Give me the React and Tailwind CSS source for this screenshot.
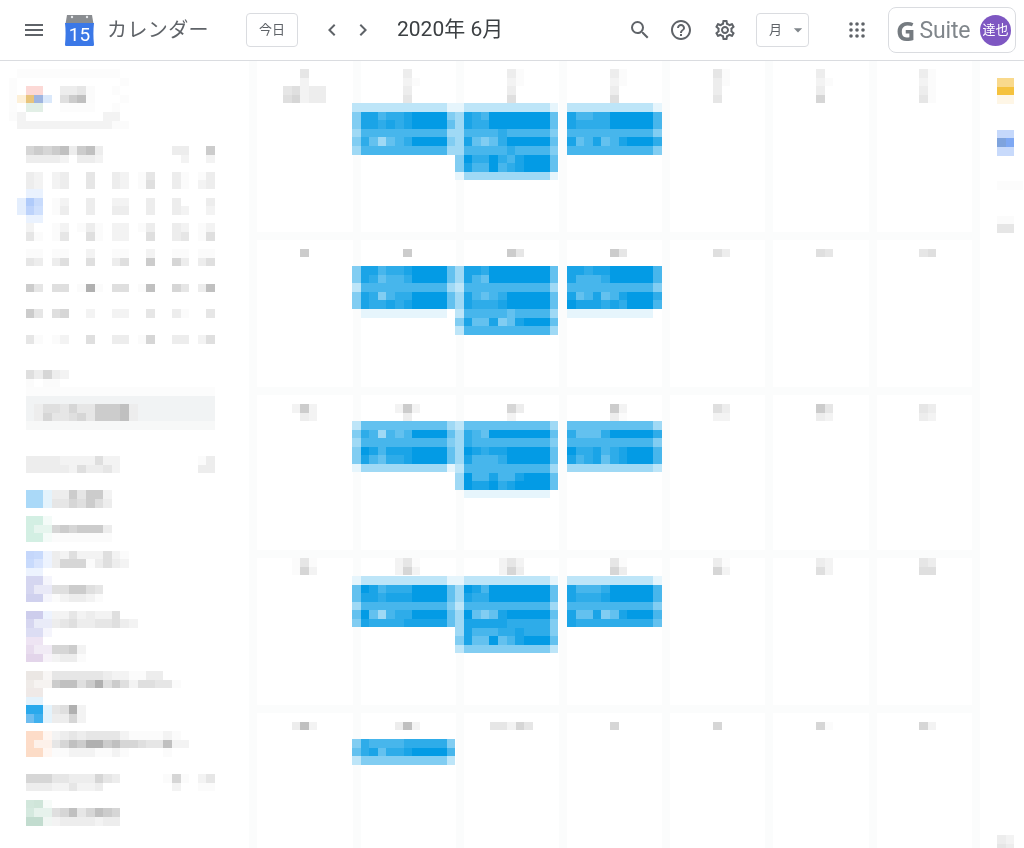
import React from "react";
import { MdMenu, MdChevronLeft, MdChevronRight, MdSearch, MdHelpOutline, MdOutlineSettings, MdArrowDropDown } from "react-icons/md";

const CELL = 8.6;
const GREY = [0, 4, 12, 18, 25, 32, 41, 51, 63, 79];
const BLUE = [0, 0.1, 0.26, 0.38, 0.5, 0.62, 0.73, 0.83, 0.91, 1];
const SWATCH = {
  R: "#fcd9d6", Y: "#fdf0d8", O: "#e8c47c", B: "#9fb5e0", L: "#dbe9fb", G: "#e2efe6",
  a: "#eaf2fe", b: "#b0cbfa", c: "#c8dbfc", d: "#e4eefd", e: "#bdd3fb", f: "#cfe0fd",
  s: "#f1f3f4", t: "#f7f8f8", g: "#aad9f8", h: "#e4f3fc", i: "#d3efe3", j: "#e6f5ee", k: "#f4fbf8",
  l: "#c5d7fb", m: "#c8dafc", n: "#edf3fe", o: "#d8e4fd",
  p: "#d5d6f0", q: "#e9e9f7", r: "#d0d1ee", u: "#f5f5fc", v: "#cdcdec", w: "#d6d6f0", x: "#e9ebf8", y: "#dcddf3",
  z: "#eee4f3", A: "#e8dcee", C: "#f1ebf5", D: "#e3d5ea", E: "#f7f3f9",
  F: "#ebe7e4", H: "#f8f6f5", I: "#efebe8", J: "#f6f3f1", K: "#efe9e7",
  M: "#e3f2fc", N: "#29a9ec", P: "#6dbdf0", Q: "#3fb0ee",
  S: "#fddcc8", T: "#fff6f1", U: "#fdf1ea", V: "#fcdcc7",
  W: "#d2e7dc", X: "#cfe5d9", Z: "#f6fbf8", "!": "#c2dccf", "@": "#e6f2ec", "#": "#d5e9df", $: "#f0f6f3",
  "%": "#f9d98c", "^": "#f5c23e", "&": "#fef6e6", "*": "#c5d8fb", "(": "#7ea3dd", ")": "#7ea8f3", "+": "#c8dafb",
  "~": "#fcfcfc",
};

function cellColor(ch, tone) {
  if (SWATCH[ch]) return SWATCH[ch];
  const n = Number(ch);
  if (tone === "blue") {
    const a = BLUE[n];
    const mix = (c) => Math.round(255 + (c - 255) * a);
    return `rgb(${mix(3)},${mix(155)},${mix(229)})`;
  }
  const v = 255 - GREY[n];
  return `rgb(${v},${v},${v})`;
}

function Mosaic({ rows, tone = "grey", className = "" }) {
  const clean = rows.map((r) => r.replace(/\s/g, ""));
  const cols = Math.max(...clean.map((r) => r.length));
  return (
    <svg
      width={cols * CELL}
      height={clean.length * CELL}
      shapeRendering="crispEdges"
      className={`block shrink-0 blur-[0.5px] ${className}`}
    >
      {clean.map((r, y) =>
        [...r].map((ch, x) =>
          ch === "0" ? null : (
            <rect key={`${x}-${y}`} x={x * CELL} y={y * CELL} width={CELL} height={CELL} fill={cellColor(ch, tone)} />
          )
        )
      )}
    </svg>
  );
}

const createButton = [
  "00 ~~~~~~~~~~~~",
  "0~0 0000000000 0~",
  "0~0 RR 00 334 1 00 ~",
  "0~ YOBL 0 5781 00 0~",
  "0~0 GG 00 ~~~~ 00 ~",
  "012 000000000 220",
  "002 2222222222 11",
];

const miniCalendar = [
  "000 676783783 00000000 33 00 7",
  "000 333320332 00000000 02 00 2",
  "",
  "000 32 0 23 00 4 00 32 0 14 00 31 0 13",
  "000 32 0 23 00 4 00 32 0 15 00 31 0 23",
  "000 aa",
  "00d bc 0 12 00 3 00 22 00 3 00 30 00 3",
  "00d ef 0 13 00 3 00 33 00 3 00 32 00 2",
  "000 aa",
  "000 20 0 12 01 3 1 0 22 0 13 00 32 0 12",
  "000 41 0 14 00 5 1 0 22 00 5 00 34 0 15",
  "",
  "000 11 0 11 00 2 00 11 00 2 00 11 0 11",
  "000 43 0 35 00 5 00 35 00 7 00 63 0 35",
  "",
  "",
  "000 74 0 55 01 9 1 0 55 0 18 00 64 0 38",
  "",
  "",
  "000 74 0 56 00 2 00 22 00 4 00 31 00 4",
  "",
  "",
  "000 41 0 12 00 5 00 33 0 16 00 33 0 25",
];

const searchLabel = ["000 53632", "000 10110"];

const searchBox = [
  "000 ~~~~~~~~~~~~~~~~~~~~~~",
  "000 ssssssssssssssssssssss",
  "000 s355464477783sssssssss",
  "000 s364456477783sssssssss",
  "000 tttttttttttttttttttttt",
];

const myCalendars = [
  "000 33332222522 000000000 13",
  "000 33333253342 000000000 33",
  "",
  "",
  "000 ggh 3 3 7 4 7 7 2",
  "000 ggh 4 4 6 5 7 5 3",
  "",
  "000 iik",
  "000 ijj 6 7 6 7 7 7 3",
  "000 iik 1 1 1 1 1 1 1",
  "",
  "000 lmn 3 2 5 2 2 2 5 2 1",
  "000 mon 3 6 6 6 1 3 5 3 2",
  "000 nn",
  "000 ppu",
  "000 pqq 5 5 7 7 5 4",
  "000 rru 1 2 3 3 2 1",
  "",
  "000 vvn 2 2 4 2 3 2 2 5",
  "000 wxx 3 4 5 3 3 4 4 5 3 2",
  "000 yyu",
  "000 zz",
  "000 ACC 6 6 7 2",
  "000 DDE 2 3 3 1",
  "",
  "000 FFH 4 4 4 4 4 4 3 2 2 1 1 3 3",
  "000 IJJ 7 8 8 5 7 9 5 7 5 2 5 5 4 4 1",
  "000 KK",
  "000 MM",
  "000 NNh 4 5 9 2",
  "000 PQh 3 3 6 2",
  "",
  "000 SST 2 3 4 3 4 4 4 4 2 1 1 1 1 2 1",
  "000 SUU 4 6 8 7 9 9 7 8 6 6 5 4 4 8 2 2",
  "000 VVT 1 1 2 2 2 1 1 2 1 0 0 0 0 1",
];

const otherCalendars = [
  "000 666 4 4 3 3 3 6 4 3 00000 1 6 1 0 2 4",
  "000 333 2 2 4 2 2 3 00000000 2 00 1 1",
  "",
  "000 WXZ",
  "000 #@@ 5 6 8 4 6 8 7 6",
  "000 !!$ 2 3 3 3 3 2 3 3",
];

const blank = (n) => Array(n).fill("");

const sideRail = [
  ...blank(2),
  "00%%", "00^^", "00&&",
  ...blank(3),
  "00**", "00()", "00++",
  ...blank(3),
  "00~~~",
  ...blank(3),
  "00 11", "00 44",
  ...blank(70),
  "00 32", "00 43",
];

const ev = {
  a1: ["222222222221", "488677899994", "488787899995", "366666666663", "475356799994", "366666666663"],
  b1: ["122222222221", "387699999995", "387799999995", "366667666664", "385457999995", "366666766664", "497797689995", "486696789995", "133333333331"],
  c1: ["22222222221", "86677999996", "87777999996", "66666666664", "85685689997", "66666666664"],
  a2: ["488677899995", "487566799995", "266666666663", "487467799995", "487787899995", "011111111110"],
  b2: ["388799999995", "386599999995", "266666666663", "386567999995", "387778999995", "266666566663", "485584589995", "266666666663"],
  c2: ["88788999996", "86667999996", "66666666664", "85685689997", "98887879996", "11111111110"],
  a3: ["255555555553", "476365699995", "366666666664", "498688899995", "486577899995", "133333333331"],
  b3: ["255555555553", "376599999995", "376666666664", "398788999995", "386667999995", "266666666663", "396686689995", "398897899995", "011111111110"],
  c3: ["55555555553", "75557999997", "66666666664", "97786789996", "86785789996", "33333333332"],
  a4: ["122222222221", "598677799995", "588788899995", "366666666664", "595367799995", "487777888885"],
  b4: ["122222222221", "398699999995", "387799999995", "266666666663", "395458999995", "388888777774", "386667787774", "485595689995", "244444444442"],
  c4: ["22222222221", "86667999996", "87778999996", "66666666664", "85584589996", "87777777775"],
  a5: ["476666777774", "578577899996", "244444444442"],
};

const weeks = [
  {
    cell: "pt-[7.8px]",
    gap: "",
    dates: [
      ["00400", "00200", "45233", "56233"],
      ["00300", "00210", "00300", "00400"],
      ["00310", "00210", "00300", "00500"],
      ["00310", "00210", "00300", "00500"],
      ["00410", "00310", "00300", "00400"],
      ["00300", "00210", "00300", "00600"],
      ["00310", "00210", "00310", "00410"],
    ],
    events: [ev.a1, ev.b1, ev.c1],
  },
  {
    cell: "pt-[8.6px]",
    gap: "mb-[8.6px]",
    dates: [["00700"], ["00700"], ["00740"], ["00740"], ["00530"], ["00540"], ["00450"]],
    events: [ev.a2, ev.b2, ev.c2],
  },
  {
    cell: "pt-[8.6px]",
    gap: "",
    dates: [
      ["02720", "00320"],
      ["02720", "00300"],
      ["00630", "00200"],
      ["00720", "00310"],
      ["00530", "00220"],
      ["00740", "00320"],
      ["00430", "00320"],
    ],
    events: [ev.a3, ev.b3, ev.c3],
  },
  {
    cell: "",
    gap: "",
    dates: [
      ["01410", "01620"],
      ["02410", "02620"],
      ["02420", "02630"],
      ["00410", "00630"],
      ["00310", "00620"],
      ["00320", "00520"],
      ["00430", "00550"],
    ],
    events: [ev.a4, ev.b4, ev.c4],
  },
  {
    cell: "pt-[8.6px]",
    gap: "mb-[8.6px]",
    dates: [["03820"], ["03820"], ["44264"], ["00600"], ["00600"], ["00610"], ["00620"]],
    events: [ev.a5],
  },
];

function DayCell({ week, weekIndex, dayIndex }) {
  const event = dayIndex >= 1 && dayIndex <= 3 ? week.events[dayIndex - 1] : null;
  return (
    <div className={`flex flex-col border-l-[8.6px] border-[#fbfcfc] ${weekIndex > 0 ? "border-t-[8.6px]" : ""} ${week.cell}`}>
      <Mosaic rows={week.dates[dayIndex]} className={`ml-[25.8px] ${week.gap}`} />
      {event && <Mosaic rows={event} tone="blue" className={event[0].length === 12 ? "-ml-[8.6px]" : ""} />}
    </div>
  );
}

function Logo() {
  return (
    <svg width="31" height="32" viewBox="0 0 31 32" className="shrink-0">
      <path d="M3 1h25l1.5 9h-28z" fill="#8a8d91" />
      <circle cx="8" cy="3" r="1.2" fill="#e8eaed" />
      <circle cx="23" cy="3" r="1.2" fill="#e8eaed" />
      <path d="M1 9h29c-.8 7 -.8 14 0 21.5c0 1-.7 1.5-1.5 1.5h-26c-.8 0-1.5-.5-1.5-1.5c.8-7.500 .8-14.500 0-21.500z" fill="#3b78e7" />
      <text x="15.500" y="27" textAnchor="middle" fontSize="19" fill="#ffffff" fontFamily="Roboto, sans-serif">15</text>
    </svg>
  );
}

function AppsDots() {
  const points = [6, 12, 18];
  return (
    <svg width="24" height="24" viewBox="0 0 24 24" className="ml-[36px] shrink-0" fill="#5f6368">
      {points.map((y) => points.map((x) => <circle key={`${x}-${y}`} cx={x} cy={y} r="1.8" />))}
    </svg>
  );
}

function Header() {
  return (
    <header className="flex h-[61px] items-center border-b border-[#dadce0] text-[#5f6368] blur-[0.4px] font-['Roboto','Noto_Sans_CJK_JP',sans-serif]">
      <MdMenu size={24} className="ml-[22px] shrink-0" />
      <div className="ml-[18px]"><Logo /></div>
      <span className="ml-[12px] text-[20px] tracking-[0.4px] whitespace-nowrap">カレンダー</span>
      <button className="ml-[37px] flex h-[34px] w-[52px] items-center justify-center rounded border border-[#dadce0] text-[13px]">今日</button>
      <MdChevronLeft size={24} className="ml-[22px] shrink-0" />
      <MdChevronRight size={24} className="ml-[7px] shrink-0" />
      <h1 className="ml-[22px] text-[21px] font-normal whitespace-nowrap text-[#3c4043]">2020年 6月</h1>
      <div className="ml-auto mr-[8px] flex items-center">
        <MdSearch size={24} />
        <MdHelpOutline size={24} className="ml-[17px]" />
        <MdOutlineSettings size={24} className="ml-[20px]" />
        <button className="ml-[19px] flex h-[34px] w-[53px] items-center rounded border border-[#dadce0] pl-[12px] text-[13px]">
          月
          <MdArrowDropDown size={20} className="ml-[6px] text-[#80868b]" />
        </button>
        <AppsDots />
        <div className="ml-[19px] flex h-[46px] w-[128px] items-center rounded-lg border border-[#dadce0] pl-[7px]">
          <span className="font-['Open_Sans',sans-serif] text-[27px] font-bold leading-none text-[#757b80]">G</span>
          <span className="ml-[4px] text-[23px] leading-none tracking-[-0.2px] text-[#80868b]">Suite</span>
          <span className="ml-auto mr-[4px] flex h-[31px] w-[31px] items-center justify-center rounded-full bg-[#7e57c2] text-[13px] text-white">達也</span>
        </div>
      </div>
    </header>
  );
}

export default function App() {
  return (
    <div className="h-[848px] w-[1024px] overflow-hidden bg-white">
      <Header />
      <div className="flex">
        <aside className="flex w-[249.4px] shrink-0 flex-col pt-[7.8px]">
          <Mosaic rows={createButton} />
          <Mosaic rows={miniCalendar} className="mt-[17.2px]" />
          <Mosaic rows={searchLabel} className="mt-[25.8px]" />
          <Mosaic rows={searchBox} />
          <Mosaic rows={myCalendars} className="mt-[25.8px]" />
          <Mosaic rows={otherCalendars} className="mt-[17.2px]" />
        </aside>
        <main className="grid h-[787px] w-[731px] shrink-0 grid-cols-[repeat(7,103.2px)] grid-rows-[171.2px_154.8px_163.4px_154.8px_142.8px] border-r-[8.6px] border-[#fbfcfc]">
          {weeks.map((week, w) =>
            [0, 1, 2, 3, 4, 5, 6].map((d) => <DayCell key={`${w}-${d}`} week={week} weekIndex={w} dayIndex={d} />)
          )}
        </main>
        <aside className="flex-1">
          <Mosaic rows={sideRail} />
        </aside>
      </div>
    </div>
  );
}
